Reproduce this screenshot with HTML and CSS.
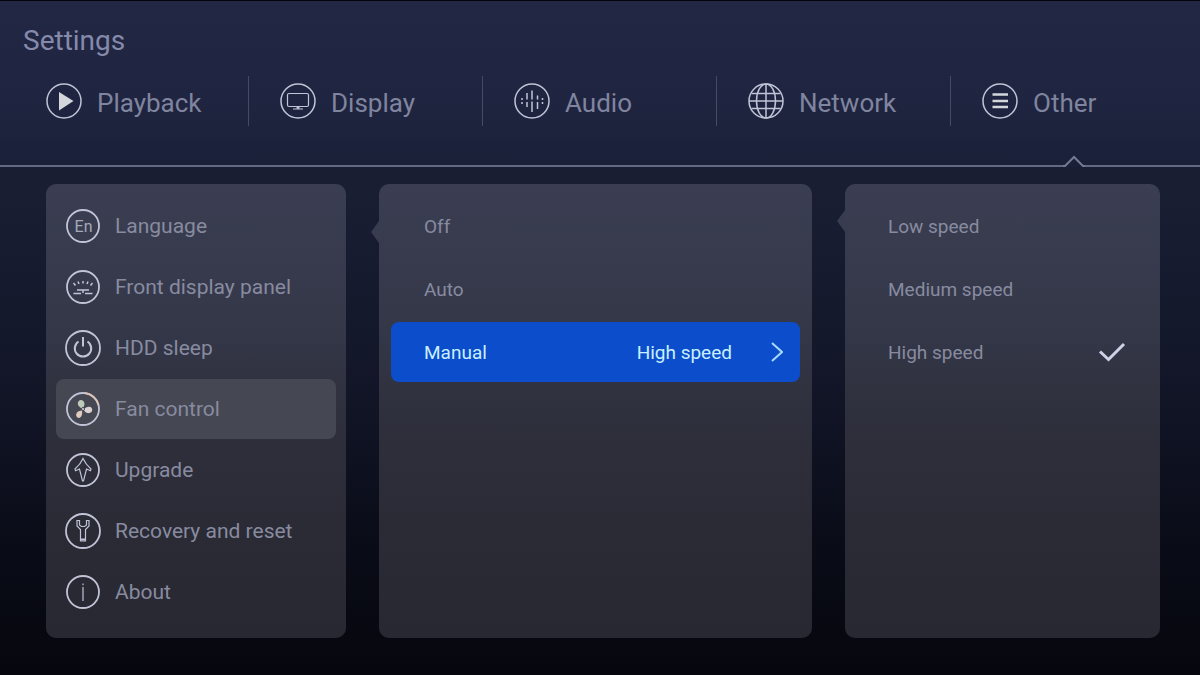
FILE: index.html
```html
<!DOCTYPE html>
<html lang="en">
<head>
    <meta charset="UTF-8">
    <meta name="viewport" content="width=device-width, initial-scale=1.0">
    <title>Settings</title>
    <link rel="stylesheet" href="styles.css">
</head>
<body>
    <header class="header">
        <h1>Settings</h1>

        <!-- Main categories -->
        <nav class="tabs">
            <a class="tab" href="#playback">
                <svg class="tab-icon" viewBox="0 0 36 36">
                    <circle cx="18" cy="18" r="17"/>
                    <path class="solid" d="M13 9 27.500 18 13 27.500z"/>
                </svg>
                <span>Playback</span>
            </a>
            <a class="tab" href="#display">
                <svg class="tab-icon" viewBox="0 0 36 36">
                    <circle cx="18" cy="18" r="17"/>
                    <rect class="thin" x="7.500" y="10.500" width="21" height="13" rx="1.5"/>
                    <path class="thin" d="M13 26h10M16.500 24.700h3"/>
                    <path class="thick" d="M17.200 25h1.600"/>
                </svg>
                <span>Display</span>
            </a>
            <a class="tab" href="#audio">
                <svg class="tab-icon" viewBox="0 0 36 36">
                    <circle cx="18" cy="18" r="17"/>
                    <path d="M8 15v2M8 19v2M13 10v6.500M13 19v5M18 7.500v9M18 18.500v10.500M23.500 12.500v4M23.500 19v7M28.500 15v2M28.500 19v2"/>
                </svg>
                <span>Audio</span>
            </a>
            <a class="tab" href="#network">
                <svg class="tab-icon" viewBox="0 0 36 36">
                    <circle cx="18" cy="18" r="17"/>
                    <ellipse cx="18" cy="18" rx="9.500" ry="17"/>
                    <path d="M18 1v34M1 18h34M3.500 10.500h29M3.500 25.500h29"/>
                </svg>
                <span>Network</span>
            </a>
            <a class="tab active" href="#other">
                <svg class="tab-icon" viewBox="0 0 36 36">
                    <circle cx="18" cy="18" r="17"/>
                    <path class="bars" d="M10.500 11.500h15.500M10.500 18h15.500M10.500 24h15.500"/>
                </svg>
                <span>Other</span>
            </a>
        </nav>

        <svg class="tab-caret" viewBox="0 0 22 12">
            <path class="caret-gap" d="M2 11 11 2 20 11V12H2z"/>
            <path class="caret-line" d="M0 11H2L11 2 20 11H22"/>
        </svg>
    </header>

    <main class="panels">
        <!-- Other: sections -->
        <nav class="panel menu">
            <a class="menu-item" href="#language">
                <svg class="menu-icon" viewBox="0 0 36 36">
                    <circle cx="18" cy="18" r="16"/>
                    <text x="18.500" y="23.500" text-anchor="middle">En</text>
                </svg>
                Language
            </a>
            <a class="menu-item" href="#front-panel">
                <svg class="menu-icon" viewBox="0 0 36 36">
                    <circle cx="18" cy="18" r="16"/>
                    <path class="rays" d="M8.500 14l2 2.500M13 12.500l1 2.500M18 12v2.500M23 12.500l-1 2.500M27.500 14l-2 2.500M12 21h12M8.500 24.500h7.500M20 24.500h7.500M18 21v3"/>
                </svg>
                Front display panel
            </a>
            <a class="menu-item" href="#hdd-sleep">
                <svg class="menu-icon" viewBox="0 0 36 36">
                    <circle cx="18" cy="18" r="17"/>
                    <path class="thick" d="M13.500 11.500a8.200 8.200 0 1 0 9 0M18 7v9.500"/>
                </svg>
                HDD sleep
            </a>
            <a class="menu-item selected" href="#fan-control">
                <svg class="menu-icon" viewBox="0 0 36 36">
                    <circle cx="18" cy="18" r="16"/>
                    <path class="glow" d="M20 2.100A16 16 0 0 1 33.500 14"/>
                    <path class="blade green" d="M17.500 17.500C13 16 11.500 12 14 9.700c2-1.700 5.500.3 5.500 3 0 2-.8 3-2 4.800z"/>
                    <path class="blade" d="M18.500 18.500c3-3.500 7.500-3.500 8.500-.8 1 2.800-2 5-4.700 4.300-1.800-.5-2.700-1.500-3.800-3.500z"/>
                    <path class="blade warm" d="M17 19.500c.8 4.500-1.200 8-3.800 7.300-2.500-.8-2.700-4-.7-5.800 1.300-1 2.500-1.300 4.500-1.500z"/>
                    <circle class="hub" cx="18" cy="18" r="1.500"/>
                </svg>
                Fan control
            </a>
            <a class="menu-item" href="#upgrade">
                <svg class="menu-icon" viewBox="0 0 36 36">
                    <circle cx="18" cy="18" r="16"/>
                    <path class="thin" d="M18 6.500C16 11 13.500 14 10 17l.5 1.700 4-1.700L17.500 29h1l3-12 4 1.700.5-1.700C22.500 14 20 11 18 6.500z"/>
                </svg>
                Upgrade
            </a>
            <a class="menu-item" href="#recovery">
                <svg class="menu-icon" viewBox="0 0 36 36">
                    <circle cx="18" cy="18" r="17"/>
                    <path class="thin" d="M12 7.500v5.500l3.500 3.500V28h5V16.500L24 13V7.500h-2.500V12l-2 1.500h-3l-2-1.500V7.500z"/>
                    <path class="thick" d="M16 26.500h4"/>
                </svg>
                Recovery and reset
            </a>
            <a class="menu-item" href="#about">
                <svg class="menu-icon" viewBox="0 0 36 36">
                    <circle cx="18" cy="18" r="16"/>
                    <path class="thin" d="M18 9.500v1.800M18 13v14"/>
                </svg>
                About
            </a>
        </nav>

        <!-- Fan mode -->
        <section class="panel options pointer low">
            <button type="button" class="option">Off</button>
            <button type="button" class="option">Auto</button>
            <button type="button" class="option current">
                Manual
                <span class="value">High speed</span>
                <svg class="chevron" viewBox="0 0 12 22"><path d="M1 2 11 11 1 20"/></svg>
            </button>
        </section>

        <!-- Fan speed -->
        <section class="panel options speeds pointer">
            <button type="button" class="option">Low speed</button>
            <button type="button" class="option">Medium speed</button>
            <button type="button" class="option">
                High speed
                <svg class="check" viewBox="0 0 28 20"><path d="M2 9.500 10.500 17.500 26 2"/></svg>
            </button>
        </section>
    </main>
</body>
</html>
```

FILE: styles.css
```css
* {
    box-sizing: border-box;
}
body {
    margin: 0;
    min-height: 100vh;
    font-family: Roboto, "Liberation Sans", sans-serif;
    color: #888ba0;
    background: linear-gradient(#1a2038 0, #191e33 190px, #121628 380px, #090b16 560px, #06070e 100%);
}
.header {
    position: relative;
    height: 167px;
    border-top: 1px solid #04050a;
    border-bottom: 2px solid #626982;
    background: linear-gradient(#222744, #1f2440 60%, #1b2039);
}
h1 {
    margin: 0;
    padding: 22px 23px 0;
    font-size: 28px;
    line-height: 36px;
    font-weight: 400;
    color: #858aab;
}
a {
    color: inherit;
    text-decoration: none;
}
svg {
    flex: none;
    fill: none;
    stroke: #c0c4d6;
    stroke-width: 1.5;
}
.tabs {
    display: grid;
    grid-template-columns: repeat(5, 1fr);
    padding: 17px 15px 0;
}
.tab {
    display: flex;
    align-items: center;
    gap: 15px;
    height: 50px;
    padding-left: 31px;
    border-right: 1px solid #454a65;
    font-size: 26px;
    color: #80859f;
}
.tab:last-child {
    border-right: none;
}
.tab span {
    padding-top: 3px;
}
.tab-icon {
    width: 36px;
    height: 36px;
}
.tab-caret {
    position: absolute;
    right: 115px;
    bottom: -2px;
    width: 22px;
    height: 12px;
}
.tab-caret .caret-gap {
    fill: #1b2039;
    stroke: none;
}
.tab-caret .caret-line {
    stroke: #737a94;
    stroke-width: 2;
}
.solid {
    fill: #d3d7dc;
    stroke: none;
}
.thin {
    stroke-width: 1.2;
}
.thick {
    stroke-width: 2;
}
.bars {
    stroke: #d3d7dc;
    stroke-width: 2.4;
}

.panels {
    display: grid;
    grid-template-columns: 300fr 433fr 315fr;
    gap: 33px;
    padding: 17px 40px 37px 46px;
}
.panel {
    position: relative;
    border-radius: 10px;
    background: linear-gradient(#3b3e52, #343849 30%, #2f303d 50%, #2a2b35 75%, #272831);
}
.menu {
    display: flex;
    flex-direction: column;
    gap: 1px;
    padding: 12px 10px 16px;
}
.menu-item {
    display: flex;
    align-items: center;
    gap: 14px;
    height: 60px;
    padding-left: 9px;
    border-radius: 8px;
    font-size: 21px;
}
.menu-item.selected {
    background-color: #454752;
}
.menu-icon {
    width: 36px;
    height: 36px;
    stroke-width: 1.8;
}
.menu-icon text {
    font-size: 16px;
    fill: #a5a9ba;
    stroke: none;
}
.menu-icon .rays {
    stroke-width: 1.5;
}
.menu-icon .glow {
    stroke: #dcc3b5;
}
.menu-icon .blade {
    fill: #d8d2d3;
    stroke: none;
}
.menu-icon .green {
    fill: #bdcbb9;
}
.menu-icon .warm {
    fill: #dfcbbf;
}
.menu-icon .hub {
    fill: #e2e2e6;
    stroke: #454752;
    stroke-width: 1;
}

.options {
    display: flex;
    flex-direction: column;
    gap: 3px;
    padding: 12px;
}
.options.speeds {
    padding-left: 10px;
}
.option {
    display: flex;
    align-items: center;
    height: 60px;
    padding: 0 17px 0 33px;
    border: none;
    border-radius: 8px;
    background: none;
    font: inherit;
    font-size: 19px;
    color: inherit;
    cursor: pointer;
}
.option.current {
    background-color: #0c4dcb;
    color: #c9f0ff;
}
.value {
    margin-left: auto;
    margin-right: 39px;
}
.chevron {
    width: 12px;
    height: 22px;
    stroke: #a9dcfa;
    stroke-width: 2;
}
.check {
    width: 28px;
    height: 20px;
    margin-left: auto;
    margin-right: 5px;
    stroke: #cfd2e6;
    stroke-width: 3;
}
/* notch on the left edge of a submenu */
.pointer::before {
    content: "";
    position: absolute;
    left: -8px;
    top: 26px;
    border: solid transparent;
    border-width: 11px 8px 11px 0;
    border-right-color: #393c4f;
}
.pointer.low::before {
    top: 37px;
}
```
